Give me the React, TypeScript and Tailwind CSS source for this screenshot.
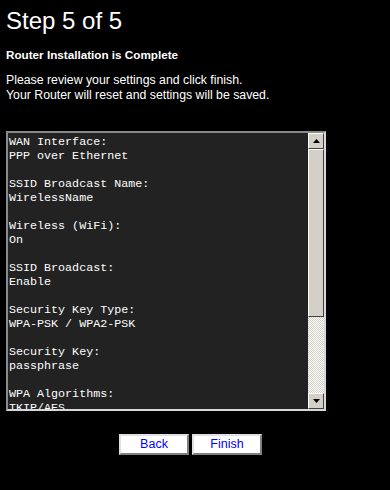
import React from "react";

const lines = [
  "WAN Interface:",
  "PPP over Ethernet",
  "",
  "SSID Broadcast Name:",
  "WirelessName",
  "",
  "Wireless (WiFi):",
  "On",
  "",
  "SSID Broadcast:",
  "Enable",
  "",
  "Security Key Type:",
  "WPA-PSK / WPA2-PSK",
  "",
  "Security Key:",
  "passphrase",
  "",
  "WPA Algorithms:",
  "TKIP/AES",
  "",
];

function Arrow({ up }: { up: boolean }) {
  return (
    <svg width="7" height="4" viewBox="0 0 7 4" className="block">
      {up ? (
        <polygon points="3.5,0 7,4 0,4" fill="#000" />
      ) : (
        <polygon points="0,0 7,0 3.5,4" fill="#000" />
      )}
    </svg>
  );
}

function ScrollBtn({ up }: { up: boolean }) {
  return (
    <div className="h-[16px] w-[16px] shrink-0 bg-[#d4d0c8] border border-t-white border-l-white border-r-[#404040] border-b-[#404040] flex items-center justify-center">
      <Arrow up={up} />
    </div>
  );
}

export default function App() {
  return (
    <div className="w-[390px] h-[490px] bg-black text-white overflow-hidden" style={{ fontFamily: '"Liberation Sans", Arial, sans-serif' }}>
      <div className="pt-[9px] pl-[6px]">
        <h1 className="text-[24px] leading-[24px] font-normal">Step 5 of 5</h1>
        <h2 className="mt-[15px] text-[11.7px] leading-[14px] font-bold">Router Installation is Complete</h2>
        <p className="mt-[11px] text-[12.3px] leading-[15px]">
          Please review your settings and click finish.
          <br />
          Your Router will reset and settings will be saved.
        </p>
      </div>
      <div className="mt-[28px] ml-[6px] w-[320px] h-[280px] border-2 border-t-[#8a8a8a] border-l-[#8a8a8a] border-r-[#d8d8d8] border-b-[#d8d8d8] bg-[#222222] flex">
        <div
          className="flex-1 overflow-hidden pl-[1px] pt-[2px] text-[11.7px] leading-[14px] whitespace-pre text-white"
          style={{ fontFamily: '"Liberation Mono", "Courier New", monospace' }}
        >
          {lines.map((l, i) => (
            <div key={i} className="h-[14px]">{l}</div>
          ))}
        </div>
        <div className="w-[16px] flex flex-col">
          <ScrollBtn up />
          <div className="h-[168px] shrink-0 bg-[#d4d0c8] border border-t-white border-l-white border-r-[#404040] border-b-[#404040]" />
          <div className="flex-1 bg-[repeating-conic-gradient(#d4d0c8_0_25%,#ffffff_0_50%)] bg-[length:2px_2px]" />
          <ScrollBtn up={false} />
        </div>
      </div>
      <div className="mt-[23px] ml-[119px] flex gap-[3px]">
        <button className="w-[70px] h-[21px] bg-white border-2 border-t-[#e0e0e0] border-l-[#e0e0e0] border-r-[#808080] border-b-[#808080] text-[#0000ff] text-[12.5px] leading-[17px]">
          Back
        </button>
        <button className="w-[70px] h-[21px] bg-white border-2 border-t-[#e0e0e0] border-l-[#e0e0e0] border-r-[#808080] border-b-[#808080] text-[#0000ff] text-[12.5px] leading-[17px]">
          Finish
        </button>
      </div>
    </div>
  );
}
